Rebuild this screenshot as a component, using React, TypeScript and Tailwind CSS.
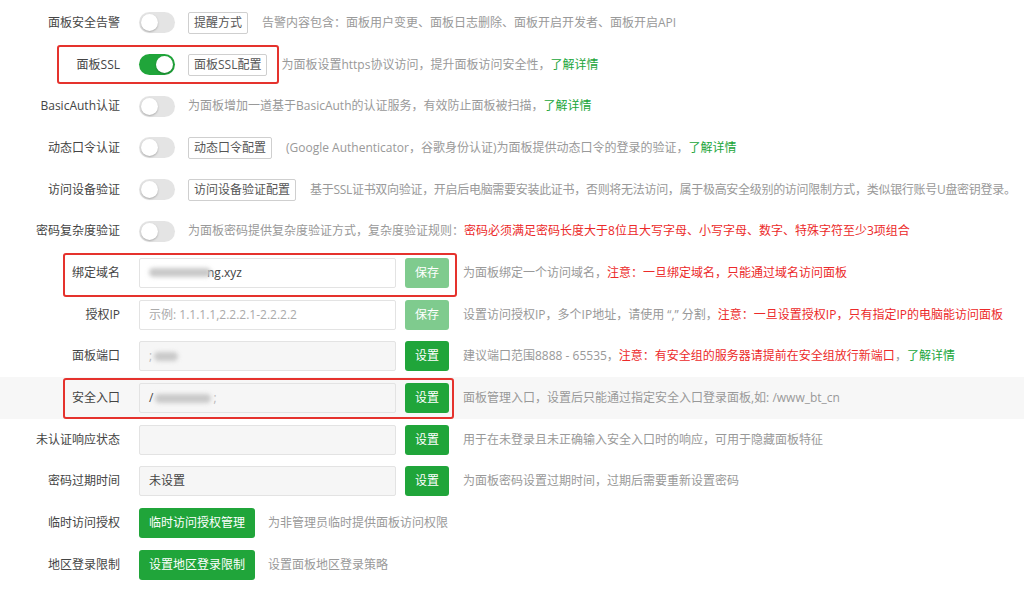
import React from "react";

const green = "text-[#20a53a]";
const red = "text-[#ec2a2a]";

function Toggle({ on = false }: { on?: boolean }) {
  return (
    <span
      className={`relative inline-block h-[21px] w-[36px] shrink-0 rounded-full ${
        on ? "bg-[#20a53a]" : "bg-[#e4e4e4]"
      }`}
    >
      <span
        className={`absolute top-[2px] h-[17px] w-[17px] rounded-full bg-white shadow-[0_1px_2px_rgba(0,0,0,0.25)] ${
          on ? "right-[2px]" : "left-[2px]"
        }`}
      />
    </span>
  );
}

function SmallBtn({ children }: { children: React.ReactNode }) {
  return (
    <span className="ml-[13px] inline-flex h-[22px] shrink-0 items-center rounded-[2px] border border-[#cfcfcf] bg-white px-[5px] text-[12px] text-[#555]">
      {children}
    </span>
  );
}

function Desc({
  children,
  gap = true,
  tight = false,
}: {
  children: React.ReactNode;
  gap?: boolean;
  tight?: boolean;
}) {
  return (
    <span
      className={`${gap ? "ml-[14px]" : "ml-[13px]"} ${
        tight ? "tracking-[-0.3px]" : ""
      } whitespace-nowrap text-[12px] text-[#999]`}
    >
      {children}
    </span>
  );
}

function Blur({ w, className = "" }: { w: number; className?: string }) {
  return (
    <span
      className={`inline-block h-[9px] rounded-full bg-[#c9c9c9] blur-[2px] ${className}`}
      style={{ width: w }}
    />
  );
}

function InputBox({
  children,
  gray = false,
}: {
  children?: React.ReactNode;
  gray?: boolean;
}) {
  return (
    <span
      className={`flex h-[30px] w-[257px] shrink-0 items-center rounded-[2px] border border-[#e3e3e3] px-[9px] text-[12px] text-[#444] ${
        gray ? "bg-[#f6f6f6]" : "bg-white"
      }`}
    >
      {children}
    </span>
  );
}

function ActBtn({ label, light = false }: { label: string; light?: boolean }) {
  return (
    <span
      className={`ml-[9px] flex h-[30px] w-[44px] shrink-0 items-center justify-center rounded-[3px] text-[12px] text-white ${
        light ? "bg-[#7fcb8e]" : "bg-[#20a53a]"
      }`}
    >
      {label}
    </span>
  );
}

function Row({
  label,
  children,
  hover = false,
}: {
  label: string;
  children: React.ReactNode;
  hover?: boolean;
}) {
  return (
    <div className={`flex h-[41.7px] items-center ${hover ? "bg-[#f7f7f7]" : ""}`}>
      <span className="w-[120px] shrink-0 text-right text-[12px] text-[#444]">{label}</span>
      <div className="ml-[19px] flex items-center">{children}</div>
    </div>
  );
}

export default function App() {
  return (
    <div className="relative h-[598px] w-[1024px] overflow-hidden bg-white pt-[2px] font-['Open_Sans','Noto_Sans_CJK_SC',sans-serif]">
      <Row label="面板安全告警">
        <Toggle />
        <SmallBtn>提醒方式</SmallBtn>
        <Desc>告警内容包含：面板用户变更、面板日志删除、面板开启开发者、面板开启API</Desc>
      </Row>
      <Row label="面板SSL">
        <Toggle on />
        <SmallBtn>面板SSL配置</SmallBtn>
        <Desc>
          为面板设置https协议访问，提升面板访问安全性，<span className={green}>了解详情</span>
        </Desc>
      </Row>
      <Row label="BasicAuth认证">
        <Toggle />
        <Desc gap={false}>
          为面板增加一道基于BasicAuth的认证服务，有效防止面板被扫描，
          <span className={green}>了解详情</span>
        </Desc>
      </Row>
      <Row label="动态口令认证">
        <Toggle />
        <SmallBtn>动态口令配置</SmallBtn>
        <Desc>
          (Google Authenticator，谷歌身份认证)为面板提供动态口令的登录的验证，
          <span className={green}>了解详情</span>
        </Desc>
      </Row>
      <Row label="访问设备验证">
        <Toggle />
        <SmallBtn>访问设备验证配置</SmallBtn>
        <Desc tight>
          基于SSL证书双向验证，开启后电脑需要安装此证书，否则将无法访问，属于极高安全级别的访问限制方式，类似银行账号U盘密钥登录。
        </Desc>
      </Row>
      <Row label="密码复杂度验证">
        <Toggle />
        <Desc gap={false}>
          为面板密码提供复杂度验证方式，复杂度验证规则：
          <span className={red}>密码必须满足密码长度大于8位且大写字母、小写字母、数字、特殊字符至少3项组合</span>
        </Desc>
      </Row>
      <Row label="绑定域名">
        <InputBox>
          <Blur w={62} className="mr-[-4px]" />
          <span>ng.xyz</span>
        </InputBox>
        <ActBtn label="保存" light />
        <Desc>
          为面板绑定一个访问域名，<span className={red}>注意：一旦绑定域名，只能通过域名访问面板</span>
        </Desc>
      </Row>
      <Row label="授权IP">
        <InputBox>
          <span className="text-[#aaa]">示例: 1.1.1.1,2.2.2.1-2.2.2.2</span>
        </InputBox>
        <ActBtn label="保存" light />
        <Desc>
          设置访问授权IP，多个IP地址，请使用 “,” 分割，
          <span className={red}>注意：一旦设置授权IP，只有指定IP的电脑能访问面板</span>
        </Desc>
      </Row>
      <Row label="面板端口">
        <InputBox gray>
          <span className="text-[#bbb]">;</span>
          <Blur w={24} className="ml-[2px]" />
        </InputBox>
        <ActBtn label="设置" />
        <Desc>
          建议端口范围8888 - 65535，
          <span className={red}>注意：有安全组的服务器请提前在安全组放行新端口</span>，
          <span className={green}>了解详情</span>
        </Desc>
      </Row>
      <Row label="安全入口" hover>
        <InputBox gray>
          <span>/</span>
          <Blur w={56} className="ml-[2px]" />
          <span className="ml-[2px] text-[#bbb]">;</span>
        </InputBox>
        <ActBtn label="设置" />
        <Desc>面板管理入口，设置后只能通过指定安全入口登录面板,如: /www_bt_cn</Desc>
      </Row>
      <Row label="未认证响应状态">
        <InputBox gray />
        <ActBtn label="设置" />
        <Desc>用于在未登录且未正确输入安全入口时的响应，可用于隐藏面板特征</Desc>
      </Row>
      <Row label="密码过期时间">
        <InputBox gray>
          <span>未设置</span>
        </InputBox>
        <ActBtn label="设置" />
        <Desc>为面板密码设置过期时间，过期后需要重新设置密码</Desc>
      </Row>
      <Row label="临时访问授权">
        <span className="flex h-[30px] w-[116px] items-center justify-center rounded-[3px] bg-[#20a53a] text-[12px] text-white">
          临时访问授权管理
        </span>
        <Desc gap={false}>为非管理员临时提供面板访问权限</Desc>
      </Row>
      <Row label="地区登录限制">
        <span className="flex h-[30px] w-[116px] items-center justify-center rounded-[3px] bg-[#20a53a] text-[12px] text-white">
          设置地区登录限制
        </span>
        <Desc gap={false}>设置面板地区登录策略</Desc>
      </Row>

      {/* red annotation boxes */}
      <div className="pointer-events-none absolute left-[57px] top-[45px] h-[39px] w-[222px] rounded-[3px] border-2 border-[#e5322d]" />
      <div className="pointer-events-none absolute left-[63px] top-[253px] h-[44px] w-[394px] rounded-[3px] border-2 border-[#e5322d]" />
      <div className="pointer-events-none absolute left-[63px] top-[378px] h-[41px] w-[391px] rounded-[3px] border-2 border-[#e5322d]" />
    </div>
  );
}
